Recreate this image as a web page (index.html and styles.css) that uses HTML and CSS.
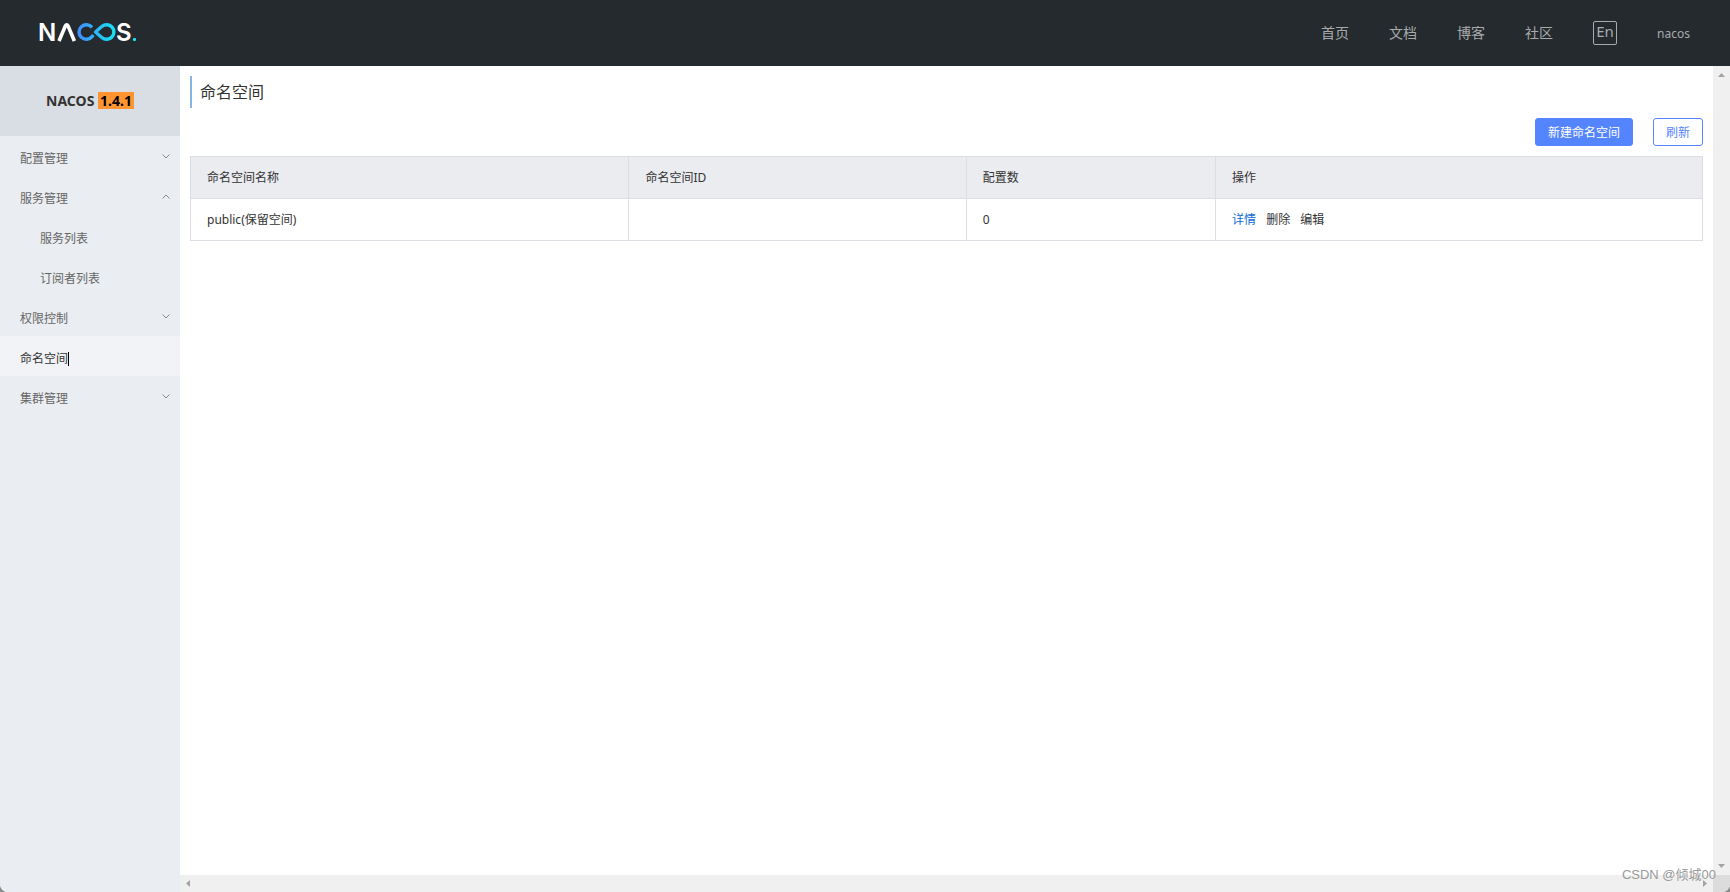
FILE: index.html
```html
<!DOCTYPE html>
<html lang="zh-CN">
<head>
<meta charset="utf-8">
<title>Nacos</title>
<link rel="stylesheet" href="styles.css">
</head>
<body>
<div class="app">
  <header class="header">
    <a class="logo" href="#" aria-label="Nacos">
      <svg width="102" height="32" viewBox="-2 -6 102 32">
        <defs>
          <linearGradient id="loop" gradientUnits="userSpaceOnUse" x1="36" y1="0" x2="76" y2="0">
            <stop offset="0" stop-color="#4489ff"/>
            <stop offset="1" stop-color="#16e4f4"/>
          </linearGradient>
        </defs>
        <text class="logo-text" x="-2" y="18">N</text>
        <path d="M19 18 L25.2 3.2 Q26.7 .6 28.2 3.2 L34.4 18" fill="none" stroke="#fff" stroke-width="3.6"/>
        <path d="M52 4.4 A7.3 7.3 0 1 0 52 13.6 L53.4 12" fill="none" stroke="url(#loop)" stroke-width="3.4"/>
        <path d="M55.5 9 L62 3.3 A7.3 7.3 0 1 1 62 14.7 Z" fill="none" stroke="url(#loop)" stroke-width="3.4" stroke-linejoin="round"/>
        <text class="logo-text" x="76" y="18">S</text>
        <rect x="93" y="15" width="3" height="3" rx="1" fill="#16e4f4"/>
      </svg>
    </a>
    <nav class="nav">
      <a href="#">首页</a>
      <a href="#">文档</a>
      <a href="#">博客</a>
      <a href="#">社区</a>
      <button class="lang" type="button">En</button>
      <a class="user" href="#">nacos</a>
    </nav>
  </header>
  <div class="body">
    <aside class="sidebar">
      <h1 class="product">NACOS <span class="version">1.4.1</span></h1>
      <ul class="menu">
        <li><a href="#">配置管理<svg class="chevron" viewBox="0 0 8 5"><path d="M.5 .5 4 4 7.5 .5"/></svg></a></li>
        <li><a href="#">服务管理<svg class="chevron" viewBox="0 0 8 5"><path d="M.5 4.5 4 1 7.5 4.5"/></svg></a>
          <ul class="submenu">
            <li><a href="#">服务列表</a></li>
            <li><a href="#">订阅者列表</a></li>
          </ul>
        </li>
        <li><a href="#">权限控制<svg class="chevron" viewBox="0 0 8 5"><path d="M.5 .5 4 4 7.5 .5"/></svg></a></li>
        <li><a class="active" href="#"><span class="caret">命名空间</span></a></li>
        <li><a href="#">集群管理<svg class="chevron" viewBox="0 0 8 5"><path d="M.5 .5 4 4 7.5 .5"/></svg></a></li>
      </ul>
    </aside>
    <main class="content">
      <h2 class="title">命名空间</h2>
      <div class="toolbar">
        <button class="btn primary" type="button">新建命名空间</button>
        <button class="btn" type="button">刷新</button>
      </div>
      <table class="table">
        <colgroup><col class="col-name"><col class="col-id"><col class="col-count"><col></colgroup>
        <thead>
          <tr><th>命名空间名称</th><th>命名空间ID</th><th>配置数</th><th>操作</th></tr>
        </thead>
        <tbody>
          <tr>
            <td>public(保留空间)</td><td></td><td>0</td>
            <td><div class="actions"><a class="detail" href="#">详情</a><a href="#">删除</a><a href="#">编辑</a></div></td>
          </tr>
        </tbody>
      </table>
    </main>
    <div class="bar vertical" aria-hidden="true">
      <svg width="7" height="4" viewBox="0 0 7 4"><path d="M0 4 3.5 0 7 4Z"/></svg>
      <svg width="7" height="4" viewBox="0 0 7 4"><path d="M0 0 3.5 4 7 0Z"/></svg>
    </div>
    <div class="bar horizontal" aria-hidden="true">
      <svg width="4" height="7" viewBox="0 0 4 7"><path d="M4 0 0 3.5 4 7Z"/></svg>
      <svg width="4" height="7" viewBox="0 0 4 7"><path d="M0 0 4 3.5 0 7Z"/></svg>
    </div>
    <div class="corner"></div>
  </div>
  <div class="watermark">CSDN @倾城00</div>
</div>
</body>
</html>
```
FILE: styles.css
```css
* {
  box-sizing: border-box;
}

body {
  margin: 0;
  background: #8a8d8c;
  color: #333;
  font: 12px/18px "Noto Sans", "Noto Sans CJK SC", sans-serif;
}

a {
  color: inherit;
  text-decoration: none;
}

button {
  font: inherit;
  cursor: pointer;
}

ul {
  margin: 0;
  padding: 0;
  list-style: none;
}

.app {
  position: relative;
  display: flex;
  flex-direction: column;
  height: 100vh;
  overflow: hidden;
  border-radius: 0 0 8px 8px;
  background: #fff;
}

.header {
  display: flex;
  align-items: center;
  justify-content: space-between;
  height: 66px;
  padding: 0 40px 0 38px;
  background: #252a2f;
}

.logo svg {
  display: block;
  overflow: visible;
}

.logo-text {
  fill: #fff;
  font: 600 24px Inter, sans-serif;
}

.nav {
  display: flex;
  align-items: center;
  gap: 40px;
  color: #a8aaac;
  font-size: 14px;
}

.lang {
  width: 24px;
  height: 24px;
  padding: 0 0 4px;
  border: 1px solid #a8aaac;
  border-radius: 2px;
  background: none;
  color: inherit;
  font-size: 15px;
  line-height: 18px;
}

.user {
  padding-top: 2px;
  font-size: 12px;
}

.body {
  flex: 1;
  display: grid;
  grid-template-columns: 180px 1fr 17px;
  grid-template-rows: 1fr 17px;
}

.sidebar {
  grid-row: 1 / 3;
  background: #eaedf1;
}

.product {
  height: 70px;
  margin: 0;
  background: #d9dde4;
  font-size: 14px;
  line-height: 70px;
  text-align: center;
}

.version {
  padding: 0 2px;
  background: #ff9431;
  color: #000;
}

.product .version {
  display: inline-block;
  line-height: 17px;
}

.menu {
  color: #666;
}

.menu a {
  display: flex;
  align-items: center;
  justify-content: space-between;
  height: 40px;
  padding: 6px 10px 0 20px;
}

.submenu a {
  padding-left: 40px;
}

.menu .active {
  background: #f2f3f7;
  color: #333;
}

.caret {
  border-right: 1px solid #000;
  line-height: 14px;
}

.chevron {
  width: 8px;
  height: 5px;
  margin-bottom: 6px;
  fill: none;
  stroke: #888;
}

.content {
  padding: 10px;
}

.title {
  margin: 0;
  padding-left: 8px;
  border-left: 2px solid #87b5df;
  font-size: 16px;
  font-weight: 400;
  line-height: 32px;
}

.toolbar {
  display: flex;
  justify-content: flex-end;
  gap: 20px;
  margin: 10px 0;
}

.btn {
  height: 28px;
  padding: 2px 12px 0;
  border: 1px solid #5584ff;
  border-radius: 3px;
  background: #fff;
  color: #5584ff;
}

.primary {
  background: #5584ff;
  color: #fff;
}

.table {
  width: 100%;
  border-collapse: collapse;
  table-layout: fixed;
}

.col-name {
  width: 29%;
}

.col-id {
  width: 22.3%;
}

.col-count {
  width: 16.5%;
}

.table th,
.table td {
  height: 42px;
  padding: 0 16px;
  border: 1px solid #dcdee3;
  font-weight: 400;
  text-align: left;
}

.table th {
  background: #ebecf0;
}

.actions {
  display: flex;
  gap: 10px;
}

.detail {
  color: #0d6bd6;
}

.bar {
  display: flex;
  align-items: center;
  justify-content: space-between;
  background: #f0f0f0;
  fill: #a3a3a3;
}

.vertical {
  flex-direction: column;
  padding: 7px 0;
}

.horizontal {
  padding: 0 6px;
}

.corner {
  background: #dcdcdc;
}

.watermark {
  position: absolute;
  right: 14px;
  bottom: 7px;
  color: #999;
  font: 13px/20px "Liberation Sans", "Noto Sans CJK SC", sans-serif;
}
```
